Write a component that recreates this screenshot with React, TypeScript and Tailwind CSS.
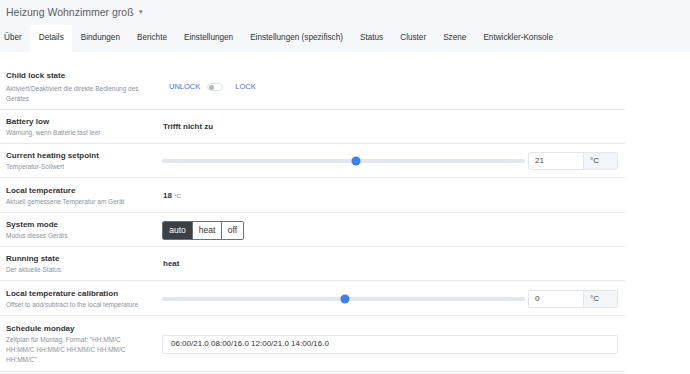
import { useState } from 'react';

const TABS = [
  'Über',
  'Details',
  'Bindungen',
  'Berichte',
  'Einstellungen',
  'Einstellungen (spezifisch)',
  'Status',
  'Cluster',
  'Szene',
  'Entwickler-Konsole',
];

function Label({ title, desc, descClass }: { title: string; desc: string; descClass?: string }) {
  return (
    <div className="pr-[8px]">
      <p className="text-[8px] font-bold leading-[12px] text-[#333]">{title}</p>
      <p className={`text-[6.5px] leading-[10px] text-[#8d9299] ${descClass ?? ''}`}>{desc}</p>
    </div>
  );
}

function Slider({ pct, value }: { pct: number; value: string }) {
  return (
    <div className="flex items-center">
      <div className="relative h-[4px] flex-1 rounded-full bg-[#e2e6ee]">
        <span
          className="absolute top-1/2 h-[9px] w-[9px] -translate-x-1/2 -translate-y-1/2 rounded-full bg-[#3b7ff0]"
          style={{ left: `${pct}%` }}
        />
      </div>
      <div className="ml-[3px] flex h-[18px] w-[90px] rounded-[2px] border border-[#e3e7ec] text-[8px] text-[#444]">
        <div className="flex w-[54px] items-center bg-white pl-[6px]">{value}</div>
        <div className="flex flex-1 items-center border-l border-[#e3e7ec] bg-[#f3f5f8] pl-[6px]">°C</div>
      </div>
    </div>
  );
}

export default function App() {
  const [mode, setMode] = useState('auto');

  return (
    <div className="h-[374px] w-[690px] overflow-hidden bg-white font-['Liberation_Sans',Arial,sans-serif]">
      <div className="bg-[#f5f7fa]">
        <div className="flex h-[25px] items-center pl-[6px] text-[10.5px] text-[#5a5e63]">
          Heizung Wohnzimmer groß
          <span className="ml-[5px] text-[7px] text-[#777]">▾</span>
        </div>
        <div className="flex h-[27px] items-stretch">
          {TABS.map((tab) => (
            <div
              key={tab}
              className={
                'flex items-center px-[8.5px] text-[8.2px] text-[#333] first:pl-[4px] ' +
                (tab === 'Details' ? 'bg-white' : '')
              }
            >
              {tab}
            </div>
          ))}
        </div>
      </div>

      <div className="w-[625px] pt-[8px]">
        <div className="grid grid-cols-[157px_1fr] items-center border-b border-[#e6e9ed] pl-[6px] pr-[7px] pb-[5px] pt-[10px]">
          <Label title="Child lock state" desc="Aktiviert/Deaktiviert die direkte Bedienung des Gerätes" descClass="mt-[2px]" />
          <div className="flex items-center text-[7.5px] text-[#4a6fd8]">
            <span className="ml-[6px]">UNLOCK</span>
            <span className="relative ml-[7px] h-[8px] w-[16px] rounded-full border border-[#dfe3e8] bg-white">
              <span className="absolute left-[1px] top-[1px] h-[5px] w-[5px] rounded-full bg-[#b4b7bb]" />
            </span>
            <span className="ml-[12px]">LOCK</span>
          </div>
        </div>

        <div className="grid grid-cols-[157px_1fr] items-center border-b border-[#e6e9ed] pt-[6px] pb-[5px] pl-[6px] pr-[7px]">
          <Label title="Battery low" desc="Warnung, wenn Batterie fast leer" />
          <p className="text-[8px] font-bold text-[#333]">Trifft nicht zu</p>
        </div>

        <div className="grid grid-cols-[156px_1fr] items-center border-b border-[#e6e9ed] pt-[6px] pb-[5px] pl-[6px] pr-[7px]">
          <Label title="Current heating setpoint" desc="Temperatur-Sollwert" />
          <Slider pct={53.4} value="21" />
        </div>

        <div className="grid grid-cols-[157px_1fr] items-center border-b border-[#e6e9ed] pt-[6.5px] pb-[5.5px] pl-[6px] pr-[7px]">
          <Label title="Local temperature" desc="Aktuell gemessene Temperatur am Gerät" />
          <p className="text-[8px] font-bold text-[#333]">
            18 <span className="text-[6px] font-normal text-[#888]">°C</span>
          </p>
        </div>

        <div className="grid grid-cols-[156px_1fr] items-center border-b border-[#e6e9ed] pt-[6px] pb-[5px] pl-[6px] pr-[7px]">
          <Label title="System mode" desc="Modus dieses Geräts" />
          <div className="flex">
            <div className="flex h-[19px] overflow-hidden rounded-[2px] border border-[#6c7077] text-[8.5px]">
              {['auto', 'heat', 'off'].map((m, i) => (
                <button
                  key={m}
                  type="button"
                  onClick={() => setMode(m)}
                  className={
                    'flex items-center justify-center ' +
                    (i > 0 ? 'border-l border-[#6c7077] ' : '') +
                    (m === 'off' ? 'w-[22px] ' : 'w-[29px] ') +
                    (mode === m ? 'bg-[#3b4046] text-white' : 'bg-white text-[#333]')
                  }
                >
                  {m}
                </button>
              ))}
            </div>
          </div>
        </div>

        <div className="grid grid-cols-[157px_1fr] items-center border-b border-[#e6e9ed] pt-[6px] pb-[5px] pl-[6px] pr-[7px]">
          <Label title="Running state" desc="Der aktuelle Status" />
          <p className="text-[8px] font-bold text-[#333]">heat</p>
        </div>

        <div className="grid grid-cols-[156px_1fr] items-center border-b border-[#e6e9ed] pt-[6.5px] pb-[5.5px] pl-[6px] pr-[7px]">
          <Label title="Local temperature calibration" desc="Offset to add/subtract to the local temperature" />
          <Slider pct={50.4} value="0" />
        </div>

        <div className="grid grid-cols-[156px_1fr] items-center border-b border-[#e6e9ed] pt-[7px] pb-[6px] pl-[6px] pr-[7px]">
          <Label
            title="Schedule monday"
            desc={'Zeitplan für Montag, Format: "HH:MM/C HH:MM/C HH:MM/C HH:MM/C HH:MM/C HH:MM/C"'}
            descClass="max-w-[132px]"
          />
          <div className="flex h-[19px] items-center rounded-[2px] border border-[#e3e7ec] pl-[8px] text-[8px] text-[#333]">
            06:00/21.0 08:00/16.0 12:00/21.0 14:00/16.0
          </div>
        </div>
      </div>
    </div>
  );
}
